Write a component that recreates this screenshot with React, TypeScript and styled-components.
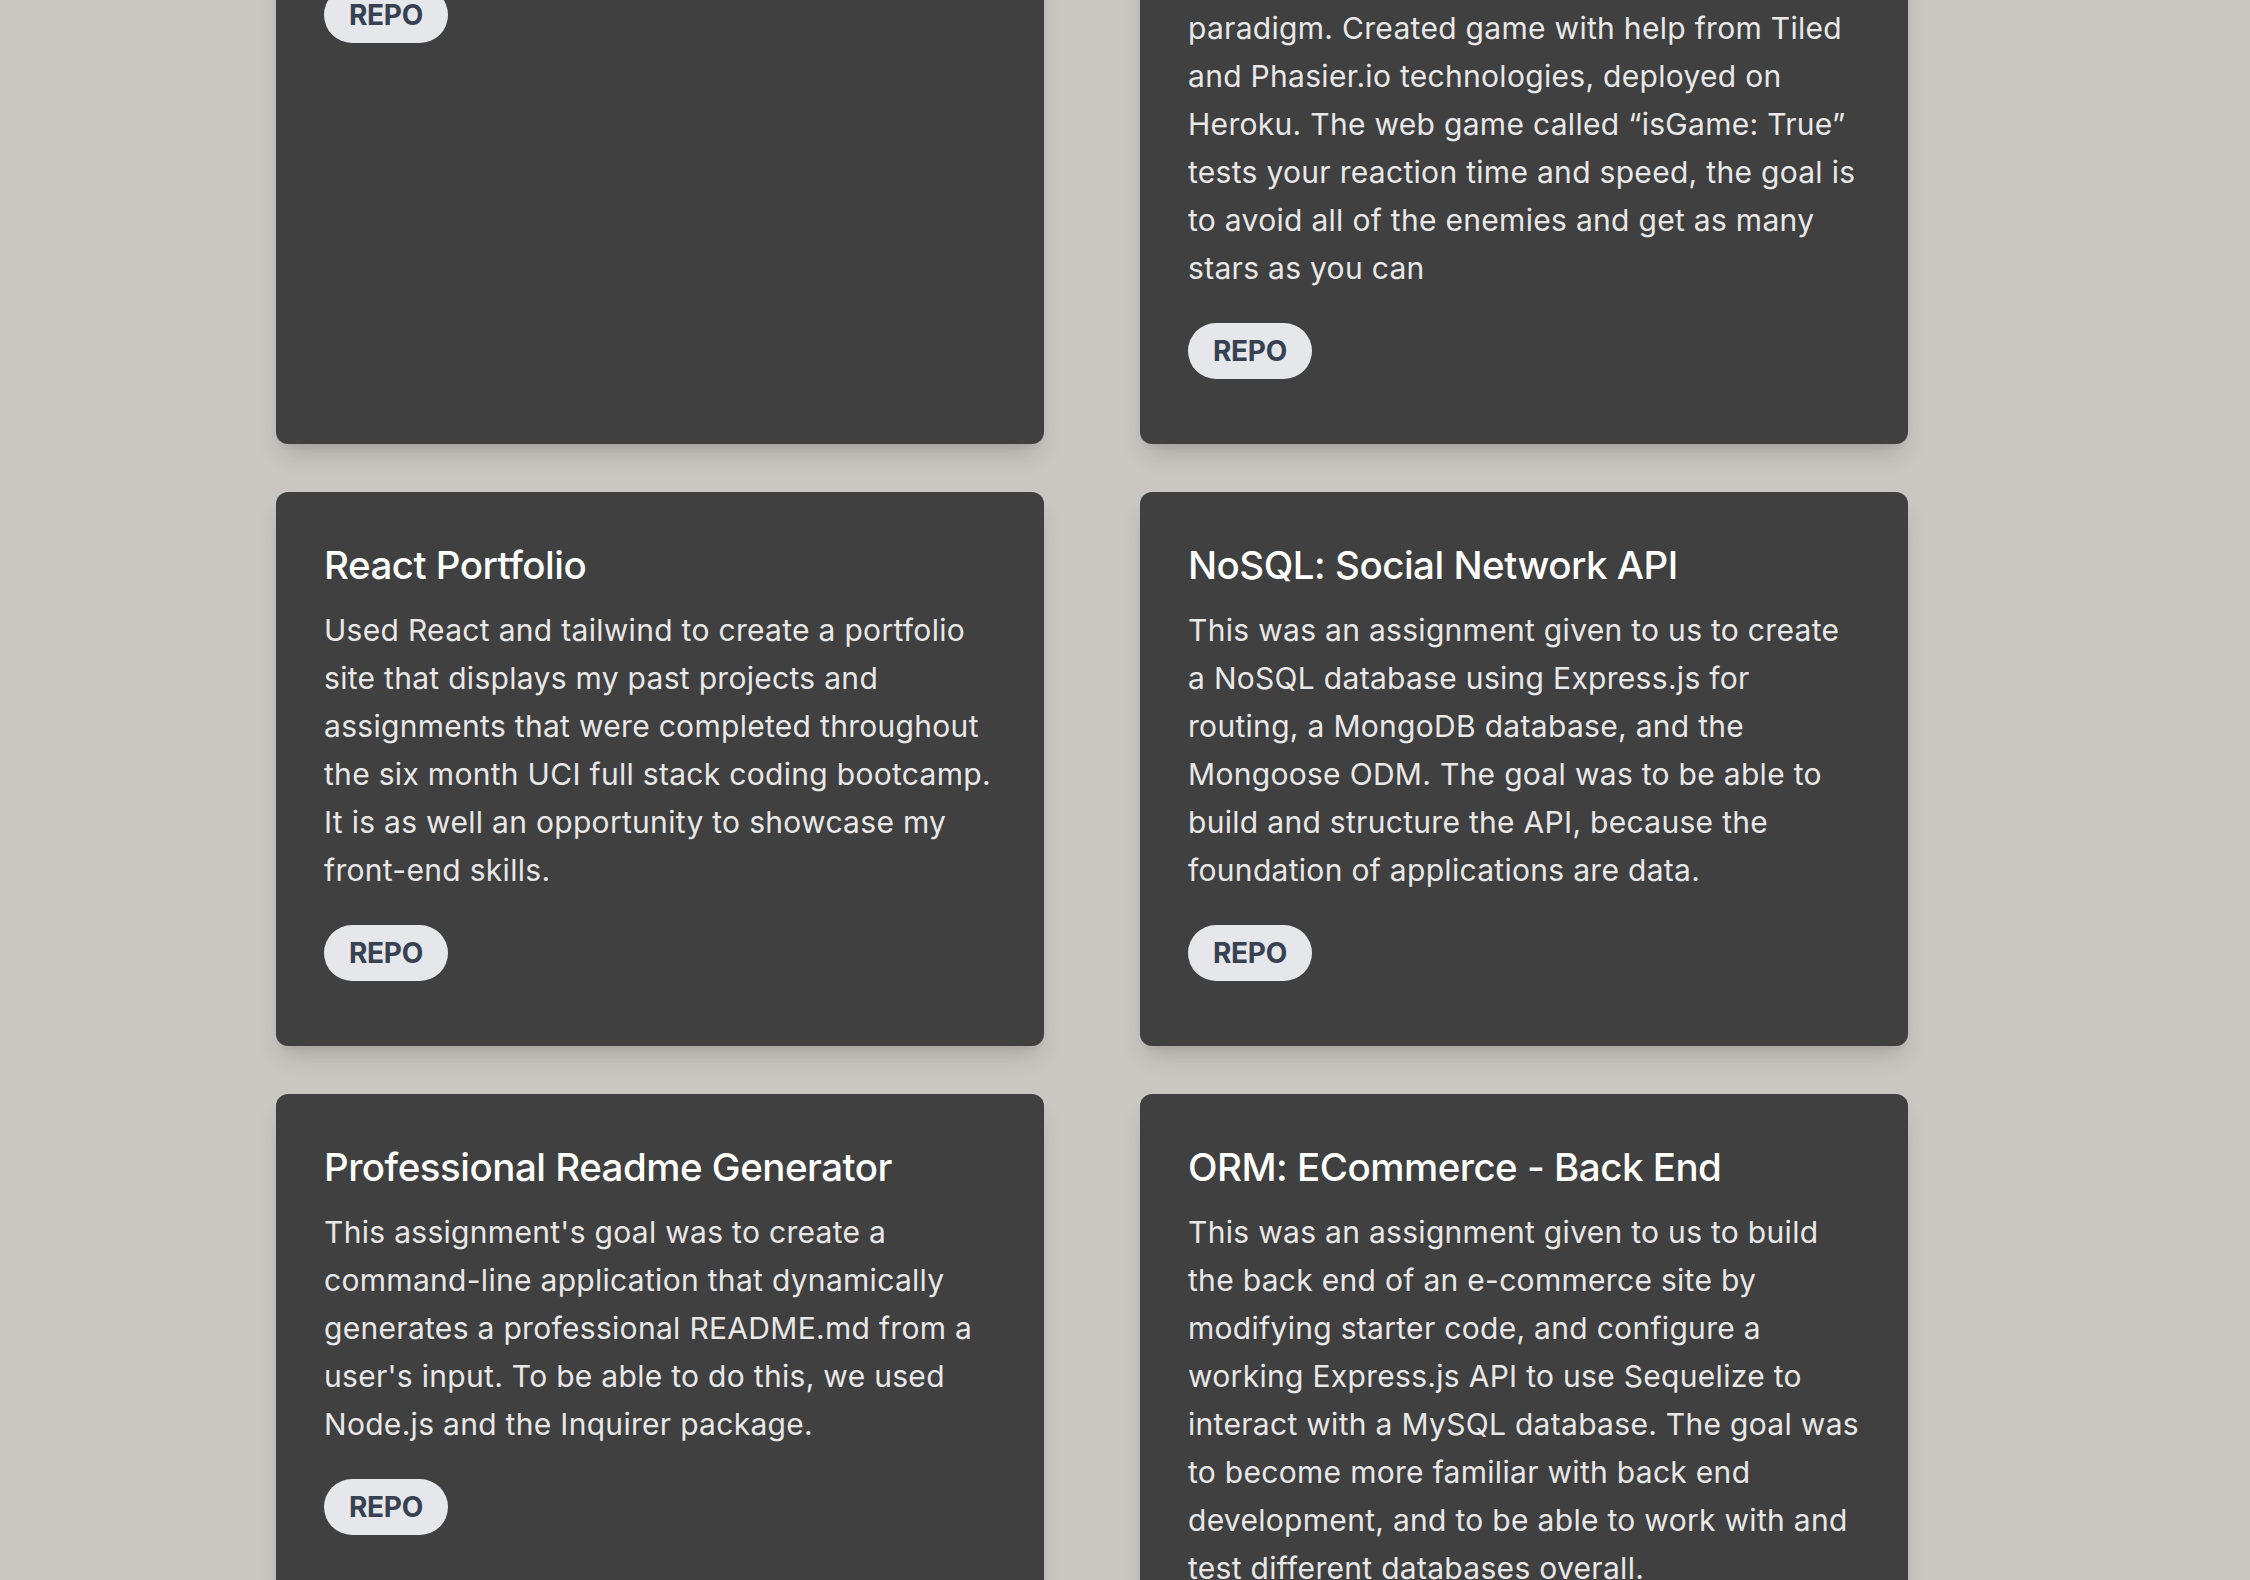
import React from "react";
import styled, { createGlobalStyle } from "styled-components";

const GlobalStyle = createGlobalStyle`
  html, body {
    margin: 0;
    padding: 0;
    background: #cac7c2;
    overflow: hidden;
  }
  body {
    font-family: Inter, "Noto Sans", "Liberation Sans", sans-serif;
    -webkit-font-smoothing: antialiased;
  }
`;

const Page = styled.main`
  width: 2250px;
  height: 1580px;
  overflow: hidden;
  background: #cac7c2;
`;

const Grid = styled.section`
  display: grid;
  grid-template-columns: 768px 768px;
  column-gap: 96px;
  row-gap: 48px;
  margin-top: -398px;
  padding-left: 276px;
`;

const Card = styled.article`
  background: #404040;
  border-radius: 12px;
  padding: 47px 48px 65px;
  box-shadow: 0 15px 24px -6px rgba(0, 0, 0, 0.16), 0 6px 9px -6px rgba(0, 0, 0, 0.12);
  display: flex;
  flex-direction: column;
  align-items: flex-start;
`;

const Title = styled.h2`
  margin: 0 0 15px;
  font-size: 38.5px;
  line-height: 52px;
  font-weight: 500;
  letter-spacing: -0.5px;
  color: #ffffff;
`;

const Description = styled.p`
  margin: 0;
  font-size: 30px;
  line-height: 48px;
  font-weight: 400;
  letter-spacing: 0.3px;
  color: #e8e8e8;
  white-space: nowrap;
`;

const RepoButton = styled.a`
  margin-top: 31px;
  height: 56px;
  padding: 0 25px;
  display: inline-flex;
  align-items: center;
  border-radius: 28px;
  background: #e5e7eb;
  color: #374151;
  font-size: 28px;
  font-weight: 700;
  letter-spacing: -0.3px;
  text-decoration: none;
  cursor: pointer;
`;

type Project = { title: string; lines: string[] };

const projects: Project[] = [
  {
    title: "Weather Dashboard",
    lines: [
      "Built a weather dashboard that uses a third-party",
      "API to retrieve current and five day forecasts",
      "for multiple cities, using dynamically updated",
      "HTML and CSS along with localStorage to keep",
      "the search history between sessions.",
    ],
  },
  {
    title: "Project 2: isGame: True",
    lines: [
      "This was a group project where we had to build",
      "a full stack application from the ground up,",
      "using Node.js, Express.js, a MySQL database,",
      "Sequelize, and Handlebars as our template",
      "engine, following the MVC folder structure",
      "and implementing the model-view-controller",
      "paradigm. Created game with help from Tiled",
      "and Phasier.io technologies, deployed on",
      "Heroku. The web game called \u201CisGame: True\u201D",
      "tests your reaction time and speed, the goal is",
      "to avoid all of the enemies and get as many",
      "stars as you can",
    ],
  },
  {
    title: "React Portfolio",
    lines: [
      "Used React and tailwind to create a portfolio",
      "site that displays my past projects and",
      "assignments that were completed throughout",
      "the six month UCI full stack coding bootcamp.",
      "It is as well an opportunity to showcase my",
      "front-end skills.",
    ],
  },
  {
    title: "NoSQL: Social Network API",
    lines: [
      "This was an assignment given to us to create",
      "a NoSQL database using Express.js for",
      "routing, a MongoDB database, and the",
      "Mongoose ODM. The goal was to be able to",
      "build and structure the API, because the",
      "foundation of applications are data.",
    ],
  },
  {
    title: "Professional Readme Generator",
    lines: [
      "This assignment's goal was to create a",
      "command-line application that dynamically",
      "generates a professional README.md from a",
      "user's input. To be able to do this, we used",
      "Node.js and the Inquirer package.",
    ],
  },
  {
    title: "ORM: ECommerce - Back End",
    lines: [
      "This was an assignment given to us to build",
      "the back end of an e-commerce site by",
      "modifying starter code, and configure a",
      "working Express.js API to use Sequelize to",
      "interact with a MySQL database. The goal was",
      "to become more familiar with back end",
      "development, and to be able to work with and",
      "test different databases overall.",
    ],
  },
];

function ProjectCard({ project }: { project: Project }) {
  return (
    <Card>
      <Title>{project.title}</Title>
      <Description>
        {project.lines.map((line, i) => (
          <React.Fragment key={i}>
            {line}
            {i < project.lines.length - 1 && <br />}
          </React.Fragment>
        ))}
      </Description>
      <RepoButton>REPO</RepoButton>
    </Card>
  );
}

export default function App() {
  return (
    <>
      <GlobalStyle />
      <Page>
        <Grid>
          {projects.map((p) => (
            <ProjectCard key={p.title} project={p} />
          ))}
        </Grid>
      </Page>
    </>
  );
}
